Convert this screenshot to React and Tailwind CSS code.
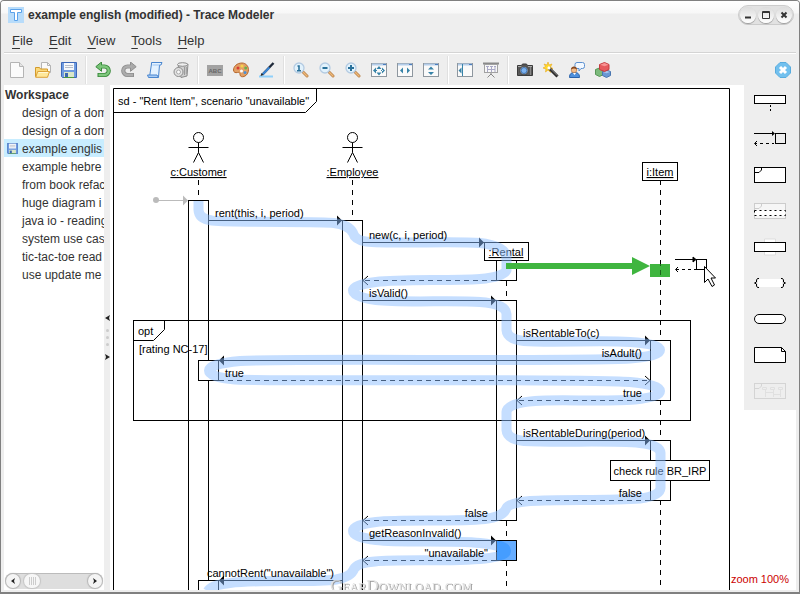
import React, { useState } from 'react';
import clsx from 'clsx';

const menus = ['File', 'Edit', 'View', 'Tools', 'Help'];

const files = [
  'design of a dom',
  'design of a dom',
  'example englis',
  'example hebre',
  'from book refac',
  'huge diagram i',
  'java io - reading',
  'system use cas',
  'tic-tac-toe read',
  'use update me',
];

/* ---------- toolbar icons ---------- */

const Icon = ({ children, size = 16 }) => (
  <svg width={size} height={size} viewBox="0 0 16 16" fill="none" aria-hidden="true">{children}</svg>
);

const NewIcon = () => (
  <Icon>
    <path d="M1.5 .5h9l4 4v11h-13z" fill="#fbfbfb" stroke="#b4b4b4" />
    <path d="M10.5 .5v4h4" fill="#e4e4e4" stroke="#b4b4b4" />
  </Icon>
);

const OpenIcon = () => (
  <Icon>
    <path d="M6.5 .5h6l3 3v7h-9z" fill="#fafafa" stroke="#b4b4b4" />
    <path d="M12.5 .5v3h3" stroke="#b4b4b4" />
    <path d="M.5 14.5v-9h4l1 1.5h7v7.5z" fill="#fbd97a" stroke="#d29a2c" />
    <path d="M.7 15.3l2-5.8h11.8l-2 5.8z" fill="#ffe89a" stroke="#dca23a" />
    <path d="M3.5 10.5h9.5" stroke="#fff8d8" />
  </Icon>
);

const SaveIcon = ({ size }) => (
  <Icon size={size}>
    <path d="M.5 .5h15v15h-14l-1-1z" fill="#6f9be0" stroke="#3d68b8" />
    <rect x="3" y="1" width="10" height="7" fill="#f6f8fb" />
    <path d="M4 3.5h8M4 5.5h8" stroke="#b7bec9" />
    <rect x="3" y="10" width="10" height="5" fill="#dbe7c8" />
    <rect x="4" y="11" width="3" height="4" fill="#3b66b0" />
    <path d="M3 15.5h10" stroke="#4f9a3c" />
  </Icon>
);

const UndoIcon = () => (
  <Icon>
    <path d="M5 4.5h4.5a4 4 0 0 1 0 8.500H2.500" stroke="#3a8a3c" strokeWidth="4.200" />
    <path d="M6.500 0L.8 4.700l5.700 4.600z" fill="#77c276" stroke="#3a8a3c" strokeLinejoin="round" />
    <path d="M5 4.500h4.500a4 4 0 0 1 0 8.500H3.500" stroke="#7fc87d" strokeWidth="2.400" />
  </Icon>
);

const RedoIcon = () => (
  <Icon>
    <path d="M11 4.500H6.500a4 4 0 0 0 0 8.500H13" stroke="#8f8f8f" strokeWidth="4.200" />
    <path d="M9.500 0l5.700 4.700-5.700 4.600z" fill="#a9a9a9" stroke="#8f8f8f" strokeLinejoin="round" />
    <path d="M11 4.500H6.500a4 4 0 0 0 0 8.500H12" stroke="#adadad" strokeWidth="2.400" />
  </Icon>
);

const ScrollIcon = () => (
  <Icon>
    <path d="M4.500 .5h10.500l-1 2.500h-1.500l-1 12H2.500L4.500 2z" fill="#e4f2ff" stroke="#4a86cf" strokeLinejoin="round" />
    <path d="M.5 13h9.500l1.500 2.500H1.500z" fill="#a9cdf6" stroke="#4a86cf" strokeLinejoin="round" />
    <path d="M5.500 3h7" stroke="#9dc5f2" />
  </Icon>
);

const TrashIcon = () => (
  <Icon>
    <path d="M5 3l10-1-1 12-6 1.500z" fill="#cfcfcf" stroke="#8a8a8a" />
    <ellipse cx="9.500" cy="2.500" rx="5" ry="1.800" fill="#eee" stroke="#8a8a8a" />
    <path d="M11.500 5v8M13.300 5v7" stroke="#9b9b9b" />
    <circle cx="5.500" cy="10" r="4.500" fill="#e2e2e2" stroke="#8a8a8a" />
    <circle cx="5.500" cy="10" r="2" fill="#fafafa" stroke="#aaa" />
  </Icon>
);

const AbcIcon = () => (
  <Icon>
    <rect x="0" y="3" width="16" height="11" fill="#a2a2a2" />
    <text x="8" y="11" textAnchor="middle" fontSize="6" fontWeight="bold" fill="#666">ABC</text>
  </Icon>
);

const PaletteIcon = () => (
  <Icon>
    <path d="M9 1C4 1 .5 4.500.5 8c0 2.500 2 3 4 2.500s2.500.5 2.500 2c0 2 2 2.700 4 2 3-1 4.500-4 4.500-7S13 1 9 1z" fill="#e2a066" stroke="#b4662c" />
    <circle cx="9" cy="4" r="1.600" fill="#f6d24c" />
    <circle cx="12.700" cy="6" r="1.500" fill="#69b04c" />
    <circle cx="12" cy="10.500" r="1.500" fill="#4c90d6" />
    <circle cx="5" cy="6" r="1.500" fill="#d83c34" />
    <circle cx="8.500" cy="9" r="1.500" fill="#fff" />
  </Icon>
);

const PenIcon = () => (
  <Icon>
    <path d="M0 14.500h14" stroke="#8fd0fa" strokeWidth="2" />
    <path d="M14.500 1L3.500 12.500" stroke="#1f2a3a" strokeWidth="2.400" />
    <path d="M10.500 5.500l-7 7" stroke="#3c88d8" strokeWidth="2" />
    <path d="M1.500 14l1-3 2 2z" fill="#222" />
  </Icon>
);

const Magnifier = ({ children }) => (
  <Icon>
    <path d="M10 10l4 4" stroke="#b9834c" strokeWidth="3" strokeLinecap="round" />
    <path d="M10.500 10.500l3.500 3.500" stroke="#efb878" strokeWidth="1.400" strokeLinecap="round" />
    <circle cx="6" cy="6" r="5" fill="#e2f2fc" stroke="#b4cbe2" strokeWidth="1.300" />
    <g stroke="#2a719a" strokeWidth="2">{children}</g>
  </Icon>
);

// window frame with a title strip, used by all of the "fit" buttons
const Pane = ({ children }) => (
  <Icon>
    <rect x=".5" y="1.500" width="15" height="13" fill="#fafafa" stroke="#8e979f" />
    <path d="M1 2.500h14" stroke="#b4cdea" strokeWidth="2" />
    <path d="M12 2.500h3" stroke="#4c7fc0" />
    <g fill="#3783a8">{children}</g>
  </Icon>
);

const BoardIcon = () => (
  <Icon>
    <path d="M0 1.500h16" stroke="#8a8a8a" strokeWidth="2" />
    <rect x="1.500" y="2.500" width="13" height="8" fill="#f7f7f7" stroke="#a2a2a2" />
    <path d="M3 4.500h3M7 4.500h3M11 4.500h2M4.500 5v5M8.500 5v5M12 5v5M5 7.500h7" stroke="#aaa9c6" />
    <path d="M8 11v2M8 12l-3.500 3.500M8 12l3.500 3.500" stroke="#888" />
  </Icon>
);

const CameraIcon = () => (
  <Icon>
    <path d="M.5 3.500h4l1-1.500h4l1 1.500h5v10H.5z" fill="#5a5a5a" stroke="#3b3b3b" />
    <path d="M1 4.500h4M11 4.500h4" stroke="#a8a8a8" />
    <circle cx="7" cy="8.500" r="4.400" fill="#9b9b9b" stroke="#444" />
    <circle cx="7" cy="8.500" r="3" fill="#7db2ee" stroke="#3f74b4" />
    <path d="M13.500 5v8" stroke="#888" />
  </Icon>
);

const WandIcon = () => (
  <Icon>
    <path d="M5 0l1 3 3-1-1.500 3L10 6.500 7 7l.5 3.500L5 8l-2.500 2L3 7 0 6l2.500-1.500L1 2l3 1z" fill="#ffd92e" stroke="#e9a71e" strokeWidth=".6" />
    <path d="M6 6l8.500 8.500" stroke="#2a2a2a" strokeWidth="3" />
    <path d="M7.500 6.800l6.800 6.800" stroke="#858585" />
    <path d="M5 5l2 2" stroke="#fff" strokeWidth="2.500" />
  </Icon>
);

const UserIcon = () => (
  <Icon>
    <path d="M8 .5h5.500a2 2 0 0 1 2 2v2a2 2 0 0 1-2 2H12l-2 2.500V6.500H8a2 2 0 0 1-2-2v-2a2 2 0 0 1 2-2z" fill="#f2f8ff" stroke="#5a8fd0" />
    <path d="M.5 15.500c0-4 2-5 5-5s5 1 5 5z" fill="#4f90dc" stroke="#2a62aa" />
    <circle cx="5" cy="8" r="2.800" fill="#f3bd8a" stroke="#a86a3c" strokeWidth=".6" />
    <path d="M2 7.500c0-4 6-4 6 0-2-1.500-4-1.500-6 0z" fill="#8a4a20" />
    <path d="M4 11l1.500 2L7 11z" fill="#fff" />
  </Icon>
);

const CubesIcon = () => (
  <Icon>
    <path d="M.5 7.500l4-1.500 4 1.500v5l-4 2-4-2z" fill="#7cba7c" stroke="#579657" />
    <path d="M7.500 9.500l4-1.500 4 1.500v4l-4 2-4-2z" fill="#6a98d4" stroke="#4a76b0" />
    <path d="M8 10l3.500 1.200L15 10l-3.500-1.200z" fill="#a8c6ec" />
    <path d="M4.500 2.500l5-2 4.500 2v5l-4.500 2-5-2z" fill="#e65a5e" stroke="#c43c40" />
    <path d="M5.200 2.800l4.300-1.700 4 1.700-4 1.500z" fill="#f89494" />
  </Icon>
);

const CloseIcon = () => (
  <Icon>
    <path d="M5 .5h6l4.500 4.500v6L11 15.500H5L.5 11V5z" fill="#72c0ee" stroke="#58acde" />
    <path d="M5 5l6 6M11 5l-6 6" stroke="#fff" strokeWidth="3" />
  </Icon>
);

const tools = [
  [
    ['New', <NewIcon />],
    ['Open', <OpenIcon />],
    ['Save', <SaveIcon />],
  ],
  [
    ['Undo', <UndoIcon />],
    ['Redo', <RedoIcon />],
    ['Script', <ScrollIcon />],
    ['Delete', <TrashIcon />],
  ],
  [
    ['Rename', <AbcIcon />],
    ['Colors', <PaletteIcon />],
    ['Highlight', <PenIcon />],
  ],
  [
    ['Zoom 1:1', <Magnifier><path d="M4.500 4h1.500v4.500M4 8.700h4" strokeWidth="1.600" /></Magnifier>],
    ['Zoom out', <Magnifier><path d="M3.500 6h5" /></Magnifier>],
    ['Zoom in', <Magnifier><path d="M3 6h6M6 3v6" /></Magnifier>],
    ['Fit page', <Pane><path d="M2 8.500l3-3v6zM14 8.500l-3-3v6zM8 4l2.500 3h-5zM8 13.500l2.500-3h-5zM4 8h2v1H4zM10 8h2v1h-2z" /></Pane>],
    ['Fit width', <Pane><path d="M3 8.500l3-3v6zM13 8.500l-3-3v6z" /></Pane>],
    ['Fit height', <Pane><path d="M8 4.500l3 3H5zM8 13l3-3H5z" /></Pane>],
  ],
  [
    ['Toggle sidebar', <Pane><path d="M5 2h1v12H5zM1.500 8.500l3-3v6z" /></Pane>],
    ['Presentation', <BoardIcon />],
  ],
  [
    ['Snapshot', <CameraIcon />],
    ['Wizard', <WandIcon />],
    ['Feedback', <UserIcon />],
    ['Plugins', <CubesIcon />],
  ],
];

/* ---------- palette icons ---------- */

const shapes = [
  ['Lifeline', <><rect x=".5" y="4.500" width="31" height="8" fill="#fff" /><path d="M16.500 14v2M16.500 18v2" /></>],
  ['Message', <><path d="M0 6.500h20" /><path d="M18 4v5l3-2.500z" fill="#000" stroke="none" /><path d="M3 14l-2.500 2.500L3 19M1 16.500h2M6 16.500h3M12 16.500h3M18 16.500h2" /><rect x="21.500" y="6.500" width="10" height="10" /></>],
  ['Frame', <><rect x=".5" y="4.500" width="31" height="15" fill="#fff" /><path d="M1 9.500h4l2.500-2.500V5" /></>],
  ['Operand', <><g stroke="#ccc"><rect x=".5" y="4.500" width="31" height="15" fill="#f6f6f6" /><path d="M1 9.500h4l2.500-2.500V5" /></g><rect x=".5" y="11.500" width="31" height="5" fill="#fff" strokeDasharray="2 3" /></>],
  ['Activation', <><path d="M10.500 4v16h11V4z" stroke="#ddd" fill="#fff" /><rect x=".5" y="7.500" width="31" height="9" fill="#fff" /></>],
  ['Constraint', <><rect x="4" y="8" width="24" height="8" rx="2" fill="#fff" stroke="none" /><path d="M5 7.500H3.500L2.500 9v2L.5 12l2 1v2l1 1.500H5M27 7.500h1.500l1 1.500v2l2 1-2 1v2l-1 1.500H27" /></>],
  ['State', <rect x=".5" y="7.500" width="31" height="9" rx="4.500" fill="#fff" />],
  ['Note', <><path d="M.5 4.500h27l4 4v11H.5z" fill="#fff" /><path d="M27.500 4.500v4h4" /></>],
  ['Reference', <><g stroke="#d4d4d4"><rect x=".5" y="4.500" width="31" height="15" /><path d="M1 9.500h4l2.500-2.500V5" /></g><path d="M8.500 8.500h4v2h-4zM16.500 8.500h4v2h-4zM24.500 8.500h4v2h-4zM11.500 11v7M19.500 11v7M26.500 11v7M12 13.500h7M20 15.500h7" stroke="#e0e0e0" /></>],
];

/* ---------- diagram ---------- */

const messages = [
  { from: 209, to: 342, y: 220.5, label: 'rent(this, i, period)', x: 215 },
  { from: 363, to: 484, y: 242.5, label: 'new(c, i, period)', x: 369 },
  { from: 496, to: 363, y: 280.5, reply: true },
  { from: 363, to: 496, y: 300.5, label: 'isValid()', x: 369 },
  { from: 517, to: 650, y: 340.5, label: 'isRentableTo(c)', x: 523 },
  { from: 650, to: 219, y: 360.5, label: 'isAdult()', x: 642, end: true },
  { from: 219, to: 650, y: 380.5, label: 'true', x: 225, reply: true },
  { from: 650, to: 517, y: 400.5, label: 'true', x: 642, end: true, reply: true },
  { from: 517, to: 650, y: 440.5, label: 'isRentableDuring(period)', x: 523 },
  { from: 650, to: 517, y: 500.5, label: 'false', x: 642, end: true, reply: true },
  { from: 496, to: 363, y: 520.5, label: 'false', x: 488, end: true, reply: true },
  { from: 363, to: 496, y: 540.5, label: 'getReasonInvalid()', x: 369 },
  { from: 496, to: 363, y: 560.5, label: '"unavailable"', x: 488, end: true, reply: true },
  { from: 342, to: 219, y: 580.5, label: 'cannotRent("unavailable")', x: 334, end: true },
];

const MessageLine = ({ from, to, y, reply }) => {
  const back = to > from ? -5 : 5;
  return (
    <g>
      <path d={`M${from} ${y}H${to}`} strokeDasharray={reply ? '5 4' : undefined} />
      {reply
        ? <path d={`M${to + back} ${y - 4.5}L${to} ${y}L${to + back} ${y + 4.5}`} />
        : <path d={`M${to} ${y}l${back} -5v10z`} fill="#000" stroke="none" />}
    </g>
  );
};

const Actor = ({ x, name }) => (
  <g>
    <circle cx={x} cy="137.500" r="5" />
    <path d={`M${x} 142.500v10M${x - 10} 147.500h20M${x} 152.500l-5 10M${x} 152.500l5 10`} />
    <text x={x} y="176" textAnchor="middle" fill="#000" stroke="none" textDecoration="underline">{name}</text>
  </g>
);

const Bar = ({ x, y, h, fill = '#fff' }) => <rect x={x} y={y} width="20" height={h} fill={fill} />;

const trace = [
  'M198.500 201v9Q199 219 212 220.500C240 223 320 221 334 223Q349 225 353 233Q355 240 366 241.500',
  'C390 244 455 241 480 243Q506 246 506.500 258V270Q504 277 480 279C450 281 400 279 376 282',
  'Q353 285 353 290.500Q353 297 376 300C400 303 455 300 480 302Q506 304 506.500 314V330',
  'Q507 339 524 341C550 343 600 340 630 342Q660 344 660 350Q660 356 630 358.500',
  'C560 362 300 358 240 361Q209 364 209 370.500Q209 377 235 379.500C300 382 570 378 630 382',
  'Q660 385 660 391Q660 397 635 399.500C600 402 560 399 535 401Q507 403 506.500 412V430',
  'Q507 439 524 441C560 443 610 440 640 443Q660 445 660.500 453V488Q660 496 640 498.500',
  'C610 501 560 499 530 501Q509 503 506.500 508Q503 517 485 519C455 522 400 519 376 522',
  'Q353 525 353 531Q353 537 376 540C400 543 450 540 480 543Q507 546 507 551Q507 556 485 558.500',
  'C450 562 400 559 375 561.500Q357 563 354 569Q351 577 336 579.500C310 583 260 579 230 583Q211 585 208 591',
].join('');

const Diagram = () => (
  <svg
    className="block shrink-0 w-[634px] h-[505px] text-[11px]"
    viewBox="110 85 634 505"
    fill="none"
    stroke="#000"
    role="img"
    aria-label="Sequence diagram of Rent Item"
  >
    <path d="M113.500 591V88.500h616V591" />
    <path d="M113.500 112.500h192l11-11v-13" />
    <text x="118" y="105" fill="#000" stroke="none">sd - "Rent Item", scenario "unavailable"</text>

    <path
      d="M198.500 180v20M352.500 180v40M506.500 281v20M506.500 521v20M506.500 561v29M660.500 180v410"
      strokeDasharray="5 5"
    />
    <Actor x={198.5} name="c:Customer" />
    <Actor x={352.5} name=":Employee" />

    {/* found message */}
    <circle cx="156" cy="200" r="3" fill="#bbb" stroke="none" />
    <path d="M156 200.500h28" stroke="#bbb" />
    <path d="M183 195.500v10l5-5z" fill="#bbb" stroke="none" />

    <Bar x={188.5} y={200.5} h={400} />
    <Bar x={198.5} y={360.5} h={20} />
    <Bar x={198.5} y={580.5} h={20} />
    <Bar x={342.5} y={220.5} h={380} />
    <Bar x={496.5} y={260.5} h={20} />
    <Bar x={496.5} y={300.5} h={220} />
    <Bar x={496.5} y={540.5} h={20} fill="#3392ff" />
    <Bar x={650.5} y={340.5} h={60} />
    <Bar x={650.5} y={440.5} h={60} />

    <rect x="484.500" y="242.500" width="44" height="18" fill="#fff" />
    <text x="506" y="256" textAnchor="middle" fill="#000" stroke="none" textDecoration="underline">:Rental</text>
    <rect x="642.500" y="162.500" width="35" height="18" fill="#fff" />
    <text x="660" y="176" textAnchor="middle" fill="#000" stroke="none" textDecoration="underline">i:Item</text>

    {/* opt fragment */}
    <rect x="133.500" y="320.500" width="557" height="100" />
    <path d="M133.500 340.500h20l11-11v-9" />
    <text x="138" y="335" fill="#000" stroke="none">opt</text>
    <text x="139" y="353" fill="#000" stroke="none">[rating NC-17]</text>

    {messages.map((m) => <MessageLine key={m.y} {...m} />)}

    <rect x="610.500" y="460.500" width="99" height="20" fill="#fff" />
    <text x="660" y="475" textAnchor="middle" fill="#000" stroke="none">check rule BR_IRP</text>

    <path d={trace} stroke="#8cbeff" strokeOpacity=".5" strokeWidth="10" />

    {/* selected activation */}
    <rect x="497" y="541" width="19" height="19" fill="#66adff" stroke="none" />
    <path d="M497 541h4Q511 544 511 550.500Q511 558 501 560h-4z" fill="#459dff" stroke="none" />

    {messages.filter((m) => m.label).map((m) => (
      <text key={m.y} x={m.x} y={m.y - 3.5} textAnchor={m.end ? 'end' : 'start'} fill="#000" stroke="none">{m.label}</text>
    ))}

    {/* message being dragged */}
    <g fill="#3fb53f" stroke="none">
      <path d="M506 263h126v-6l18 9-18 9v-6H506z" />
      <rect x="650" y="264" width="20" height="13" />
    </g>
    <path d="M660.500 264v2M660.500 270v5" stroke="#1c641c" />
    <path d="M675 259.500h20M678 267l-2.500 2.500 2.500 2.500M676 269.500h3M682 269.500h3M688 269.500h3M694 269.500h2" />
    <path d="M693 257v5l3-2.500z" fill="#000" />
    <rect x="696.500" y="259.500" width="10" height="10" />
    <path d="M704.500 266.500v16l3.500-3.500 4 7.500 2.500-1.500-3.500-7h4.500z" fill="#fff" />

    <text
      x="401"
      y="591"
      textAnchor="middle"
      className="font-['Liberation_Serif',serif] text-[17px] [font-variant:small-caps] drop-shadow-[1px_1px_0_#999]"
      fill="#e4e4e4"
      stroke="none"
    >
      GearDownload.com
    </text>
  </svg>
);

/* ---------- window ---------- */

const WindowButton = ({ label, children }) => (
  <button type="button" aria-label={label} className="flex size-4 items-center justify-center rounded-full bg-gradient-to-b from-[#dcdcdc] to-white shadow-[0_1px_1px_#999]">
    <svg width="8" height="8" viewBox="0 0 8 8" fill="none" stroke="#333">{children}</svg>
  </button>
);

const ScrollButton = ({ label, d }) => (
  <button type="button" aria-label={label} className="flex size-[14px] shrink-0 items-center justify-center rounded-full bg-[#f4f4f4] shadow-[0_0_1px_1px_#b5b5b5]">
    <svg width="6" height="6" viewBox="0 0 6 6" fill="#222"><path d={d} /></svg>
  </button>
);

const App = () => {
  const [selected, setSelected] = useState(2);

  return (
    <div className="flex h-screen flex-col overflow-hidden rounded-t border border-b-2 border-[#808080] bg-[#eee] px-[3px] pb-[2px] font-['Liberation_Sans',Arial,sans-serif] text-xs text-[#333]">
      <header className="-mx-[3px] flex h-7 shrink-0 items-center bg-[linear-gradient(#fff,#f7f7f7_12px,#eee_13px)] pr-[5px] pl-[7px]">
        <svg width="16" height="16" viewBox="0 0 16 16" className="mr-1" aria-hidden="true">
          <rect width="16" height="16" fill="#b8dcfa" />
          <path d="M2.500 2.500h11v3h-4v8h-3v-8h-4z" fill="#fff" stroke="#5aa2ea" />
        </svg>
        <h1 className="flex-1 text-xs font-bold whitespace-nowrap">example english (modified) - Trace Modeler</h1>
        <div className="flex h-5 items-center gap-[2px] rounded-full border border-[#ccc] bg-[#e2e2e2] px-[1px]">
          <WindowButton label="Minimize"><path d="M1 6.500h6" strokeWidth="2" /></WindowButton>
          <WindowButton label="Maximize"><path d="M.5 .5h7v7h-7zM1 1.500h6" /></WindowButton>
          <WindowButton label="Close"><path d="M1.500 1.500l5 5M6.500 1.500l-5 5" strokeWidth="2" /></WindowButton>
        </div>
      </header>

      <nav className="flex h-6 shrink-0 items-center gap-4 border-b border-[#d4d4d4] pl-2 text-[13px] shadow-[0_1px_0_#fff]">
        {menus.map((name) => (
          <button key={name} type="button" className="leading-4">
            <span className="underline underline-offset-[3px]">{name[0]}</span>{name.slice(1)}
          </button>
        ))}
      </nav>

      <div className="flex h-8 shrink-0 items-center pt-[2px]" role="toolbar" aria-label="Tools">
        {tools.map((group, i) => (
          <div key={i} className="flex items-center">
            {i > 0 && <div className="mx-[3px] h-7 w-[2px] border-l border-[#e0e0e0] bg-white"></div>}
            {group.map(([label, icon]) => (
              <button key={label} type="button" aria-label={label} className="flex h-6 w-[26px] items-center justify-center">
                {icon}
              </button>
            ))}
          </div>
        ))}
        <button type="button" aria-label="Close diagram" className="mr-[5px] ml-auto"><CloseIcon /></button>
      </div>

      <main className="relative flex min-h-0 flex-1">
        <aside className="flex w-[100px] shrink-0 flex-col overflow-hidden bg-white">
          <h2 className="h-[18px] pt-px pl-px text-xs leading-[18px] font-bold">Workspace</h2>
          <ul className="flex-1">
            {files.map((name, i) => (
              <li key={i}>
                <button
                  type="button"
                  onClick={() => setSelected(i)}
                  className={clsx('flex h-[18px] w-full items-center pt-px pl-[3px] whitespace-nowrap', i === selected && 'bg-[#c8edff]')}
                >
                  <span className="w-[15px] shrink-0">{i === 2 && <SaveIcon size={11} />}</span>
                  {name}
                </button>
              </li>
            ))}
          </ul>
          <div className="mx-px mb-px flex h-4 items-center justify-between rounded-full bg-[#dedede] px-px shadow-[inset_0_1px_0_#bbb]">
            <ScrollButton label="Scroll left" d="M5 0L1 3l4 3-1-3z" />
            <div className="mr-auto ml-1 flex h-[14px] w-4 items-center justify-center gap-px rounded-full bg-[#f6f6f6] shadow-[0_0_1px_1px_#c4c4c4]">
              <i className="h-2 w-px bg-[#ccc]"></i>
              <i className="h-2 w-px bg-[#ccc]"></i>
              <i className="h-2 w-px bg-[#ccc]"></i>
              <i className="h-2 w-px bg-[#ccc]"></i>
            </div>
            <ScrollButton label="Scroll right" d="M1 0l4 3-4 3 1-3z" />
          </div>
        </aside>

        <div className="flex w-[6px] shrink-0 flex-col items-center justify-center gap-2">
          <button type="button" aria-label="Collapse sidebar"><svg width="5" height="6" viewBox="0 0 5 6" fill="#222"><path d="M5 0L0 3l5 3-1-3z" /></svg></button>
          <div className="flex flex-col gap-1">
            <i className="size-[3px] rounded-full bg-[#ccc]"></i>
            <i className="size-[3px] rounded-full bg-[#ccc]"></i>
            <i className="size-[3px] rounded-full bg-[#ccc]"></i>
          </div>
          <button type="button" aria-label="Expand sidebar"><svg width="5" height="6" viewBox="0 0 5 6" fill="#222"><path d="M0 0l5 3-5 3 1-3z" /></svg></button>
        </div>

        <section className="min-w-0 flex-1 overflow-hidden bg-white">
          <Diagram />
        </section>

        <div className="w-[52px] shrink-0 bg-white">
          <div className="flex flex-col bg-[#eee] pb-px">
            {shapes.map(([label, shape]) => (
              <button key={label} type="button" aria-label={label} className="flex h-9 items-center pl-[10px]">
                <svg width="32" height="24" viewBox="0 0 32 24" fill="none" stroke="#000">{shape}</svg>
              </button>
            ))}
          </div>
        </div>

        <output className="absolute right-[7px] bottom-1 text-[11px] leading-[14px] text-[#c00]">zoom 100%</output>
      </main>
    </div>
  );
};

export default App;
